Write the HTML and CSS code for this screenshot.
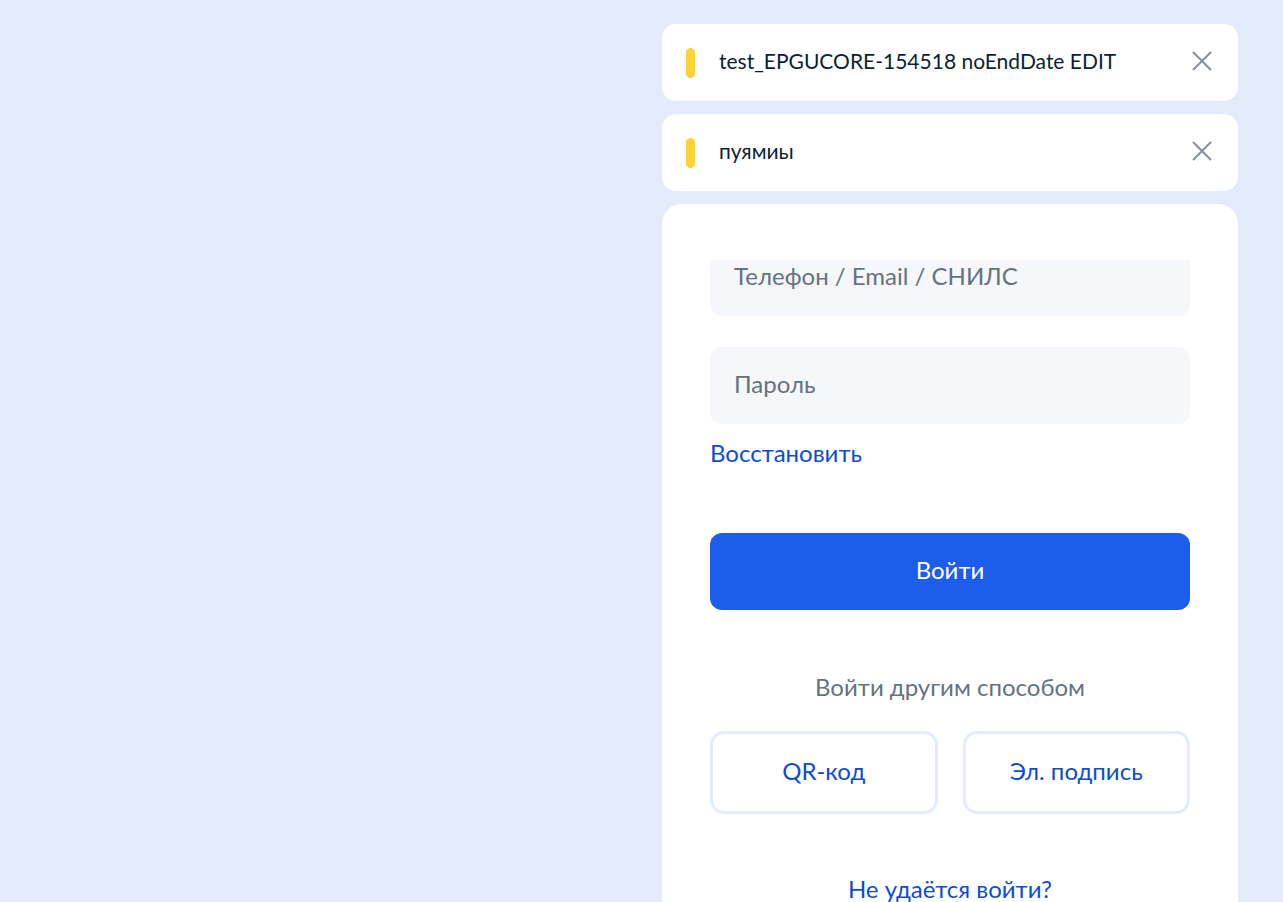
FILE: index.html
```html
<!DOCTYPE html>
<html lang="ru">
<head>
<meta charset="utf-8">
<title>Вход</title>
<link rel="stylesheet" href="styles.css">
</head>
<body>
<div class="page">
  <div class="column">
    <div class="notice">
      <span class="notice-mark"></span>
      <span class="notice-text">test_EPGUCORE-154518 noEndDate EDIT</span>
      <button class="notice-close" aria-label="Закрыть">
        <svg width="20" height="20" viewBox="0 0 20 20"><path d="M1 1 L19 19 M19 1 L1 19" stroke="#86909c" stroke-width="2" fill="none"/></svg>
      </button>
    </div>
    <div class="notice">
      <span class="notice-mark"></span>
      <span class="notice-text">пуямиы</span>
      <button class="notice-close" aria-label="Закрыть">
        <svg width="20" height="20" viewBox="0 0 20 20"><path d="M1 1 L19 19 M19 1 L1 19" stroke="#86909c" stroke-width="2" fill="none"/></svg>
      </button>
    </div>
    <div class="card">
      <div class="viewport">
        <div class="form">
          <div class="field field-login"><span class="placeholder">Телефон / Email / СНИЛС</span></div>
          <div class="field field-pass"><span class="placeholder">Пароль</span></div>
          <a class="link restore" href="#">Восстановить</a>
          <button class="btn-primary">Войти</button>
          <div class="alt-title">Войти другим способом</div>
          <div class="alt-row">
            <button class="btn-alt">QR-код</button>
            <button class="btn-alt">Эл. подпись</button>
          </div>
          <a class="link trouble" href="#">Не удаётся войти?</a>
        </div>
      </div>
    </div>
  </div>
</div>
</body>
</html>
```
FILE: styles.css
```css
* { box-sizing: border-box; }
html, body { margin: 0; height: 100%; overflow: hidden; }
body {
  background: #e4ebfc;
  font-family: Lato, "Noto Sans", sans-serif;
  color: #0b1f33;
}
.page {
  display: flex;
  justify-content: flex-end;
  height: 100%;
  padding-right: 31px;
}
.column {
  width: 627px;
  background: #e3eaf9;
  padding: 24px 14px 0 37px;
  display: flex;
  flex-direction: column;
  gap: 13px;
}
.notice {
  flex: none;
  height: 77px;
  background: #fff;
  border-radius: 14px;
  display: flex;
  align-items: center;
  padding: 0 26px 0 24px;
}
.notice-mark {
  width: 9px;
  height: 30px;
  border-radius: 5px;
  background: #fdd13a;
  flex: none;
}
.notice-text {
  margin-left: 24px;
  margin-bottom: 4px;
  font-size: 21px;
  flex: 1;
  color: #0b1f33;
}
.notice-close {
  border: 0;
  background: none;
  padding: 0;
  width: 20px;
  height: 20px;
  margin-bottom: 4px;
  display: flex;
}
.card {
  background: #fff;
  border-radius: 20px 20px 0 0;
  flex: 1;
  min-height: 0;
  padding: 56px 48px 0;
}
.viewport {
  overflow: hidden;
  height: 100%;
}
.form {
  display: flex;
  flex-direction: column;
}
.field {
  flex: none;
  height: 77px;
  background: #f5f7fa;
  border-radius: 12px;
  display: flex;
  align-items: center;
  padding: 0 24px 4px;
}
.field-login { margin-top: -21px; }
.field-pass { margin-top: 31px; }
.placeholder {
  font-size: 24px;
  color: #66727f;
}
.link {
  color: #0d4cd3;
  text-decoration: none;
  font-size: 24px;
  line-height: 29px;
}
.restore {
  margin-top: 14px;
  align-self: flex-start;
}
.btn-primary {
  flex: none;
  margin-top: 66px;
  height: 77px;
  border: 0;
  border-radius: 12px;
  background: #1d5deb;
  color: #fff;
  font-family: inherit;
  font-size: 24px;
  padding: 0 0 4px;
}
.alt-title {
  margin-top: 62px;
  text-align: center;
  font-size: 24px;
  line-height: 29px;
  color: #66727f;
}
.alt-row {
  margin-top: 30px;
  display: flex;
  gap: 25px;
}
.btn-alt {
  flex: 1;
  height: 83px;
  background: #fff;
  border: 3px solid #e4ebfc;
  border-radius: 14px;
  color: #0d4cd3;
  font-family: inherit;
  font-size: 24px;
  padding: 0 0 4px;
}
.trouble {
  margin-top: 60px;
  align-self: center;
}
```
